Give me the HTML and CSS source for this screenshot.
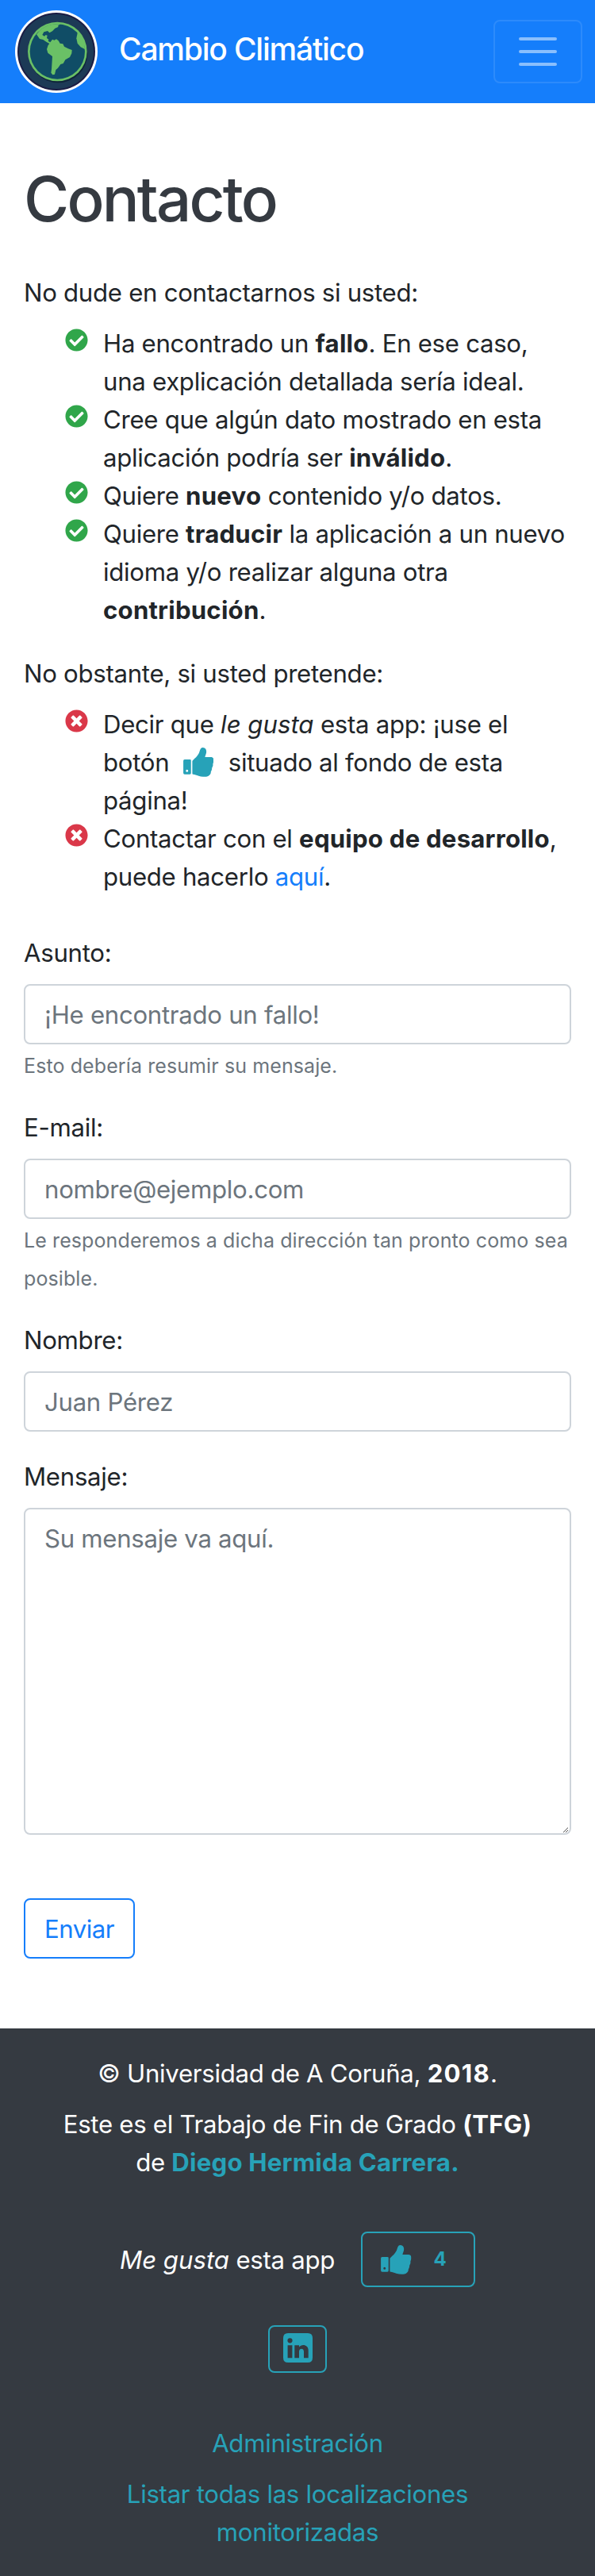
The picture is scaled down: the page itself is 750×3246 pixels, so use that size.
FILE: index.html
```html
<!DOCTYPE html>
<html lang="es">
<head>
<meta charset="utf-8">
<title>Contacto</title>
<link rel="stylesheet" href="styles.css">
</head>
<body>
<svg class="defs" width="0" height="0">
  <symbol id="check" viewBox="0 0 512 512"><path d="M504 256c0 136.967-111.033 248-248 248S8 392.967 8 256 119.033 8 256 8s248 111.033 248 248zM227.314 387.314l184-184c6.248-6.248 6.248-16.379 0-22.627l-22.627-22.627c-6.248-6.249-16.379-6.249-22.628 0L216 308.118l-70.059-70.059c-6.248-6.248-16.379-6.248-22.628 0l-22.627 22.627c-6.248 6.248-6.248 16.379 0 22.627l104 104c6.249 6.249 16.379 6.249 22.628.001z"/></symbol>
  <symbol id="cross" viewBox="0 0 512 512"><path d="M256 8C119 8 8 119 8 256s111 248 248 248 248-111 248-248S393 8 256 8zm121.600 313.100c4.700 4.700 4.700 12.300 0 17L338 377.600c-4.700 4.700-12.300 4.700-17 0L256 312l-65.100 65.600c-4.700 4.700-12.300 4.700-17 0L134.400 338c-4.700-4.700-4.700-12.300 0-17l65.600-65-65.600-65.100c-4.700-4.700-4.700-12.300 0-17l39.600-39.600c4.700-4.700 12.300-4.700 17 0l65 65.700 65.100-65.600c4.700-4.700 12.300-4.700 17 0l39.600 39.600c4.700 4.700 4.700 12.300 0 17L312 256l65.600 65.100z"/></symbol>
  <symbol id="thumb" viewBox="0 0 115 111"><path fill-rule="evenodd" d="M5 45H25Q29 45 29 49V97Q29 101 25 101H5Q0 101 0 96V50Q0 45 5 45ZM14 83.500A4.500 4.500 0 1 0 14 92.500A4.500 4.500 0 1 0 14 83.500Z"/><path d="M34 52Q34 49 37 47C45 40 52 34 57 25C64 14 62 0 74 0C84 0 88 8 87 18C86 26 83 30 82 36H104C112 36 116 42 115 50C115 56 111 60 112 65C113 70 109 74 108 78C109 84 105 88 104 92C105 100 100 105 94 108C84 112 70 111 58 107C49 104 44 101 37 101Q34 101 34 98Z"/></symbol>
</svg>

<header class="navbar">
  <a class="brand" href="#">
    <svg class="logo" viewBox="57 39 312 312">
      <circle cx="213" cy="195" r="156" fill="#fff"/>
      <circle cx="213" cy="195" r="147" fill="#1b1d44"/>
      <circle cx="213" cy="195" r="141" fill="#1d3a56"/>
      <circle cx="220" cy="202" r="111" fill="#0b1d33" opacity=".75"/>
      <circle cx="217" cy="195" r="112" fill="#6ac066"/>
      <circle cx="217" cy="195" r="104" fill="#104d66"/>
      <path fill="#6ac066" d="M138 130 C155 104 188 87 229 91 L220 96 L220 102 L208 107 L198 118 L187 124 L180 117 L166 121 L160 132 L168 137 L173 132 L179 134 L177 144 L184 149 L182 155 L190 160 L198 149 L205 152 L213 148 L221 154 L227 164 L238 166 L243 176 L258 184 L272 189 L271 202 L264 216 L247 226 L239 240 L229 243 L219 257 L211 264 L207 281 L199 283 L193 275 L195 262 L198 213 L181 200 L177 186 L182 171 L187 165 L175 158 L163 150 L150 147 Z"/>
      <path fill="#6ac066" d="M294 119 L289 145 L293 164 L305 178 L321 186 C320 160 310 137 294 119Z"/>
    </svg>
    <span class="brand-name">Cambio Climático</span>
  </a>
  <button class="toggler"><span></span><span></span><span></span></button>
</header>

<main class="content">
  <h1>Contacto</h1>
  <p class="intro">No dude en contactarnos si usted:</p>
  <ul class="list ok">
    <li><svg class="bullet"><use href="#check"/></svg>Ha encontrado un <b>fallo</b>. En ese caso,<br>una explicación detallada sería ideal.</li>
    <li><svg class="bullet"><use href="#check"/></svg>Cree que algún dato mostrado en esta<br>aplicación podría ser <b>inválido</b>.</li>
    <li><svg class="bullet"><use href="#check"/></svg>Quiere <b>nuevo</b> contenido y/o datos.</li>
    <li><svg class="bullet"><use href="#check"/></svg>Quiere <b>traducir</b> la aplicación a un nuevo<br>idioma y/o realizar alguna otra<br><b>contribución</b>.</li>
  </ul>
  <p class="intro">No obstante, si usted pretende:</p>
  <ul class="list no">
    <li><svg class="bullet"><use href="#cross"/></svg>Decir que <i>le gusta</i> esta app: ¡use el<br>botón <svg class="thumb inline-thumb"><use href="#thumb"/></svg> situado al fondo de esta<br>página!</li>
    <li><svg class="bullet"><use href="#cross"/></svg>Contactar con el <b>equipo de desarrollo</b>,<br>puede hacerlo <a href="#">aquí</a>.</li>
  </ul>

  <form class="form">
    <div class="group">
      <label for="asunto">Asunto:</label>
      <input id="asunto" placeholder="¡He encontrado un fallo!">
      <small>Esto debería resumir su mensaje.</small>
    </div>
    <div class="group">
      <label for="email">E-mail:</label>
      <input id="email" placeholder="nombre@ejemplo.com">
      <small>Le responderemos a dicha dirección tan pronto como sea<br>posible.</small>
    </div>
    <div class="group">
      <label for="nombre">Nombre:</label>
      <input id="nombre" placeholder="Juan Pérez">
    </div>
    <div class="group message">
      <label for="mensaje">Mensaje:</label>
      <textarea id="mensaje" placeholder="Su mensaje va aquí."></textarea>
      <svg class="grip" viewBox="0 0 6 6"><path d="M0 6L6 0M3 6L6 3" stroke="#555" fill="none"/></svg>
    </div>
    <button class="send" type="button">Enviar</button>
  </form>
</main>

<footer class="footer">
  <p>© Universidad de A Coruña, <b class="year">2018</b>.</p>
  <p>Este es el Trabajo de Fin de Grado <b>(TFG)</b><br>de <a href="#"><b>Diego Hermida Carrera.</b></a></p>
  <div class="like-row">
    <span class="like-text"><i>Me gusta</i> esta app</span>
    <button class="like"><svg class="thumb"><use href="#thumb"/></svg><b>4</b></button>
  </div>
  <a class="linkedin" href="#" aria-label="LinkedIn">
    <svg viewBox="0 0 37 37"><path fill-rule="evenodd" d="M6 0H31Q37 0 37 6V31Q37 37 31 37H6Q0 37 0 31V6Q0 0 6 0ZM5.600 15.300V31.300H11.400V15.300ZM8.500 6.200A3.100 3.100 0 1 0 8.500 12.400A3.100 3.100 0 1 0 8.500 6.200ZM14.300 15.300V31.300H20V23C20 18.500 26 18.500 26 23V31.300H31.700V22C31.700 14 23 13.500 20 17.500V15.300Z"/></svg>
  </a>
  <p class="link"><a href="#">Administración</a></p>
  <p class="link"><a href="#">Listar todas las localizaciones<br>monitorizadas</a></p>
</footer>
</body>
</html>
```
FILE: styles.css
```css
* { box-sizing: border-box; }
body { margin: 0; font: 31.2px/48px Inter, "Liberation Sans", sans-serif; letter-spacing: -0.3px; color: #212529; background: #fff; white-space: nowrap; }
.defs { display: block; position: absolute; }
a { color: #157efb; text-decoration: none; }
b { font-weight: 700; letter-spacing: 0.2px; }
i { letter-spacing: 0; }
button, input, textarea { font: inherit; letter-spacing: inherit; }

.navbar { height: 130px; padding: 0 16px 0 19px; background: #157efb; display: flex; align-items: center; justify-content: space-between; }
.brand { display: flex; align-items: center; gap: 27px; color: #fff; font-size: 39px; font-weight: 500; letter-spacing: -1.2px; }
.logo { width: 104px; height: 104px; display: block; }
.brand-name { padding-bottom: 6px; }
.toggler { width: 112px; height: 80px; border: 2px solid #2d8bfb; border-radius: 8px; background: none; display: flex; flex-direction: column; align-items: center; justify-content: center; gap: 12px; padding: 0; }
.toggler span { width: 48px; height: 4px; border-radius: 2px; background: #8abffd; }

.content { height: 2426px; padding: 73px 30px 0; }
h1 { margin: 0 0 46px; font-size: 78px; line-height: 96px; font-weight: 500; letter-spacing: -2.8px; color: #353a41; }
.intro { margin: 0 0 16px; }
.list { list-style: none; margin: 0 0 32px; padding: 0 0 0 100px; }
.list li { position: relative; }
.bullet { position: absolute; left: -48px; top: 5px; width: 29px; height: 29px; }
.ok .bullet { fill: #30a64a; }
.no .bullet { fill: #da3849; }
.thumb { width: 38.500px; height: 37px; fill: #27a2b8; }
.inline-thumb { margin: -10px 10px 0 9px; vertical-align: -7px; }

.form { margin-top: 48px; }
.group { display: flex; flex-direction: column; margin-bottom: 33px; position: relative; }
label { margin-bottom: 15px; }
input, textarea { height: 76px; width: 690px; border: 2px solid #ced4da; border-radius: 8px; padding: 13px 24px 11px; background: #fff; outline: 0; }
::placeholder { color: #6c757d; opacity: 1; }
textarea { height: 412px; resize: none; display: block; }
small { font-size: 25px; letter-spacing: 0.1px; margin: 3px 0 -3px; color: #6c757d; }
.grip { position: absolute; right: 4px; bottom: 3px; width: 6px; height: 6px; }
.message { margin-bottom: 80px; }
.send { width: 140px; height: 76px; border: 2px solid #157efb; border-radius: 8px; background: #fff; color: #157efb; padding: 2px 0 0; display: block; letter-spacing: -0.5px; }

.footer { height: 690px; background: #353a41; color: #fff; text-align: center; padding-top: 33px; display: flex; flex-direction: column; align-items: center; }
.footer p { margin: 0 0 16px; }
.footer a { color: #27a2b8; }
.year { letter-spacing: 1.2px; }
.like-row { display: flex; align-items: center; gap: 33px; margin-top: 47px; }
.like-text { padding-top: 2px; }
.like { width: 144px; height: 70px; border: 2px solid #27a2b8; border-radius: 8px; background: none; color: #27a2b8; font-size: 24px; padding: 0 0 0 23px; display: flex; align-items: center; gap: 28px; }
.linkedin { margin: 48px 0 65px; width: 74px; height: 60px; border: 2px solid #27a2b8; border-radius: 8px; display: flex; justify-content: center; padding-top: 8px; }
.linkedin svg { width: 37px; height: 37px; fill: #27a2b8; }
```
